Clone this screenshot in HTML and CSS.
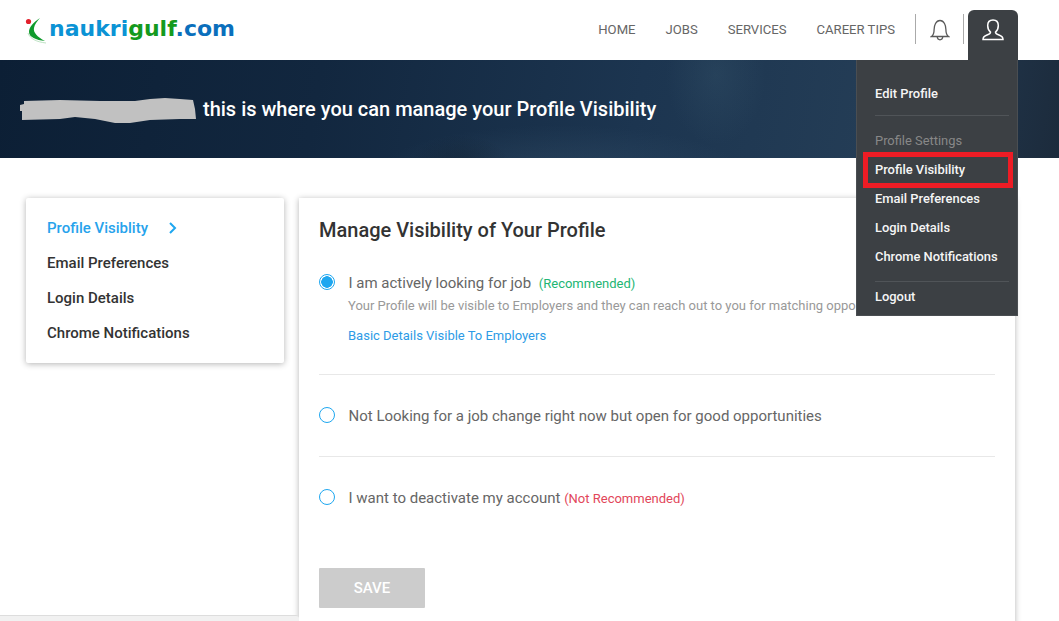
FILE: index.html
```html
<!DOCTYPE html>
<html lang="en">
<head>
<meta charset="utf-8">
<title>Profile Visibility</title>
<link rel="stylesheet" href="styles.css">
</head>
<body>
<div class="page">
  <header class="topbar">
    <a class="logo">
      <svg class="logo-mark" width="23" height="27" viewBox="0 0 23 27">
        <circle cx="3.500" cy="4.500" r="2.600" fill="#e2202c"/>
        <path d="M15 1C8 6 4 10 4 15c0 5 7 8 16 9C12 20 8 15 9 11c.5-3 3-7 6-10z" fill="#0f9a2c"/>
        <path d="M3 16c2 6 9 9 18 10" fill="none" stroke="#bfe3c4" stroke-width="1"/>
      </svg>
      <span class="logo-text">naukri<b class="logo-green">gulf</b><b class="logo-dark">.com</b></span>
    </a>
    <nav class="nav">
      <a class="nav-link">HOME</a>
      <a class="nav-link">JOBS</a>
      <a class="nav-link">SERVICES</a>
      <a class="nav-link">CAREER TIPS</a>
    </nav>
    <div class="bell">
      <svg width="20" height="23" viewBox="0 0 20 23" fill="none" stroke="#5a5a5a" stroke-width="1.300">
        <path d="M1.500 18.500c2-1.500 2.600-3.500 2.600-7 0-4 1.800-9 5.900-9s5.900 5 5.900 9c0 3.500.6 5.500 2.600 7z"/>
        <path d="M7.200 18.800c.2 2 1.300 3 2.800 3s2.600-1 2.800-3"/>
      </svg>
    </div>
    <div class="user-tab">
      <svg width="22" height="22" viewBox="0 0 22 22" fill="none" stroke="#fff" stroke-width="1.500">
        <path d="M1 20.500c0-2.500 1-3.500 4-4.500 2-.7 3.500-1.300 3.500-2.800-1.800-1.500-2.800-4-2.800-6.700C5.700 3 8 1 11 1s5.300 2 5.300 5.500c0 2.700-1 5.200-2.800 6.700 0 1.500 1.500 2.100 3.500 2.800 3 1 4 2 4 4.500z"/>
      </svg>
    </div>
  </header>

  <section class="hero">
    <svg class="redact" width="178" height="27" viewBox="0 0 178 27">
      <path d="M0 9L4 8 4 5 40 4 80 5 115 5 130 3 145 2 160 3 173 4 175 13 176 23 160 23 130 24 110 27 95 27 75 23 55 21 40 23 2 24 2 15 0 15z" fill="#c1c1c1"/>
    </svg>
    <h1 class="hero-title">this is where you can manage your Profile Visibility</h1>
  </section>

  <main class="content">
    <aside class="side">
      <a class="side-link side-active">Profile Visiblity
        <svg class="chev" width="9" height="12" viewBox="0 0 9 12" fill="none" stroke="#1ea7f0" stroke-width="2"><path d="M2 1l5 5-5 5"/></svg>
      </a>
      <a class="side-link">Email Preferences</a>
      <a class="side-link">Login Details</a>
      <a class="side-link">Chrome Notifications</a>
    </aside>
    <section class="panel">
      <h2 class="panel-title">Manage Visibility of Your Profile</h2>
      <div class="option option-first">
        <span class="radio radio-on"></span>
        <div class="option-body">
          <p class="option-label">I am actively looking for job <span class="tag-good">(Recommended)</span></p>
          <p class="option-desc">Your Profile will be visible to Employers and they can reach out to you for matching opportunities</p>
          <a class="option-link">Basic Details Visible To Employers</a>
        </div>
      </div>
      <div class="option option-mid">
        <span class="radio"></span>
        <div class="option-body">
          <p class="option-label">Not Looking for a job change right now but open for good opportunities</p>
        </div>
      </div>
      <div class="option option-last">
        <span class="radio"></span>
        <div class="option-body">
          <p class="option-label">I want to deactivate my account <span class="tag-bad">(Not Recommended)</span></p>
        </div>
      </div>
      <button class="save">SAVE</button>
    </section>
  </main>

  <div class="footer-strip"></div>

  <div class="menu">
    <a class="menu-item menu-edit">Edit Profile</a>
    <span class="menu-head">Profile Settings</span>
    <a class="menu-item menu-boxed">Profile Visibility</a>
    <a class="menu-item">Email Preferences</a>
    <a class="menu-item">Login Details</a>
    <a class="menu-item">Chrome Notifications</a>
    <a class="menu-item menu-logout">Logout</a>
  </div>
</div>
</body>
</html>
```
FILE: styles.css
```css
* { box-sizing: border-box; }
html, body { margin: 0; height: 100%; overflow: hidden; background: #fff; }
body { font-family: Roboto, "Liberation Sans", sans-serif; color: #555; }
p, h1, h2 { margin: 0; }
.page { position: relative; width: 1059px; height: 621px; overflow: hidden; }

.topbar { display: flex; align-items: flex-start; height: 60px; padding: 10px 41px 0 25px; background: #fff; }
.logo { display: flex; align-items: center; height: 34px; margin-top: 3px; }
.logo-mark { display: block; margin-right: 1px; }
.logo-text { margin-bottom: 3px; font: 700 22px "DejaVu Sans", sans-serif; color: #0b93d5; }
.logo-green { color: #149a1e; }
.logo-dark { color: #0a6fbc; }
.nav { display: flex; gap: 30px; margin-left: auto; height: 39px; align-items: center; }
.nav-link { font-size: 13.1px; color: #666; }
.bell { display: flex; align-items: center; justify-content: center; width: 49px; height: 30px; margin: 4px 0 0 20px; border-left: 1px solid #aaa; border-right: 1px solid #aaa; }
.user-tab { display: flex; align-items: center; justify-content: center; width: 50px; height: 50px; margin-left: 4px; padding-bottom: 10px; background: #3c4044; border-radius: 6px 6px 0 0; }

.hero { display: flex; align-items: center; height: 98px; padding: 0 0 0 20px; background:
  radial-gradient(ellipse 50px 70px at 716px 15px, rgba(70,105,125,.2), transparent),
  radial-gradient(ellipse 50px 30px at 460px 105px, rgba(10,20,30,.3), transparent),
  radial-gradient(ellipse 180px 45px at 560px 110px, rgba(70,100,125,.28), transparent),
  linear-gradient(100deg, #0c1f35 0%, #12273f 30%, #1c3550 60%, #243d56 82%, #1c2b3c 100%); }
.redact { display: block; margin-right: 5px; }
.hero-title { font-size: 20px; font-weight: 500; color: #fff; }

.content { display: flex; align-items: flex-start; gap: 15px; padding: 40px 44px 0 26px; }
.side { display: flex; flex-direction: column; gap: 15px; width: 258px; height: 165px; padding: 20px 21px; background: #fff; border-radius: 2px; box-shadow: 0 1px 6px rgba(0,0,0,.3); }
.side-link { font-size: 15px; font-weight: 500; line-height: 20px; color: #333; }
.side-active { display: flex; align-items: center; gap: 20px; color: #27a3ec; }
.panel { flex: 1; height: 460px; padding: 20px; background: #fff; box-shadow: 0 1px 6px rgba(0,0,0,.3); }
.panel-title { margin-bottom: 31px; font-size: 20px; font-weight: 500; line-height: 24px; color: #333; }
.option { display: flex; gap: 13px; }
.option-first { height: 101px; }
.option-mid, .option-last { align-items: flex-start; padding-top: 31px; border-top: 1px solid #e8e8e8; height: 82px; }
.option-last { height: 112px; }
.radio { flex: none; width: 16px; height: 16px; margin: 1px 0 0; border: 1px solid #1ea7f0; border-radius: 50%; background: #fff; }
.radio-on { background: radial-gradient(circle, #1ea7f0 0 5.500px, #fff 6px); }
.option-label { padding-left: .5px; font-size: 15px; line-height: 20px; color: #666; white-space: nowrap; }
.tag-good { margin-left: 4px; font-size: 13px; color: #22b573; }
.tag-bad { font-size: 13px; color: #e2465a; }
.option-desc { margin-top: 3px; font-size: 13px; line-height: 17px; color: #999; white-space: nowrap; }
.option-link { display: block; margin-top: 13px; font-size: 13px; line-height: 17px; color: #2d9be6; }
.save { display: block; width: 106px; height: 40px; padding: 0; border: 0; border-radius: 1px; background: #ccc; color: #fff; font: 500 15px Roboto, sans-serif; }

.footer-strip { position: absolute; left: 0; bottom: 0; width: 299px; height: 6px; background: #f1f1f1; border-top: 1px solid #ddd; border-top-right-radius: 3px; }

.menu { position: absolute; top: 60px; left: 856px; width: 162px; height: 256px; padding: 24px 8px 0 18px; background: #3c4044; border: 1px solid #4a4e52; border-top: 0; }
.menu-item { display: block; height: 29px; font-size: 12.9px; font-weight: 500; line-height: 19px; color: #f5f5f5; }
.menu-head { display: block; height: 29px; font-size: 12.9px; line-height: 19px; color: #888; }
.menu-edit { height: 32px; margin-bottom: 15px; border-bottom: 1px solid #505458; }
.menu-boxed { position: relative; }
.menu-boxed::before { content: ""; box-sizing: border-box; position: absolute; left: -12px; top: -8px; width: 150px; height: 36px; border: 5px solid #ee1c25; }
.menu-logout { height: 40px; margin-top: 5px; padding-top: 5px; border-top: 1px solid #505458; }
```
